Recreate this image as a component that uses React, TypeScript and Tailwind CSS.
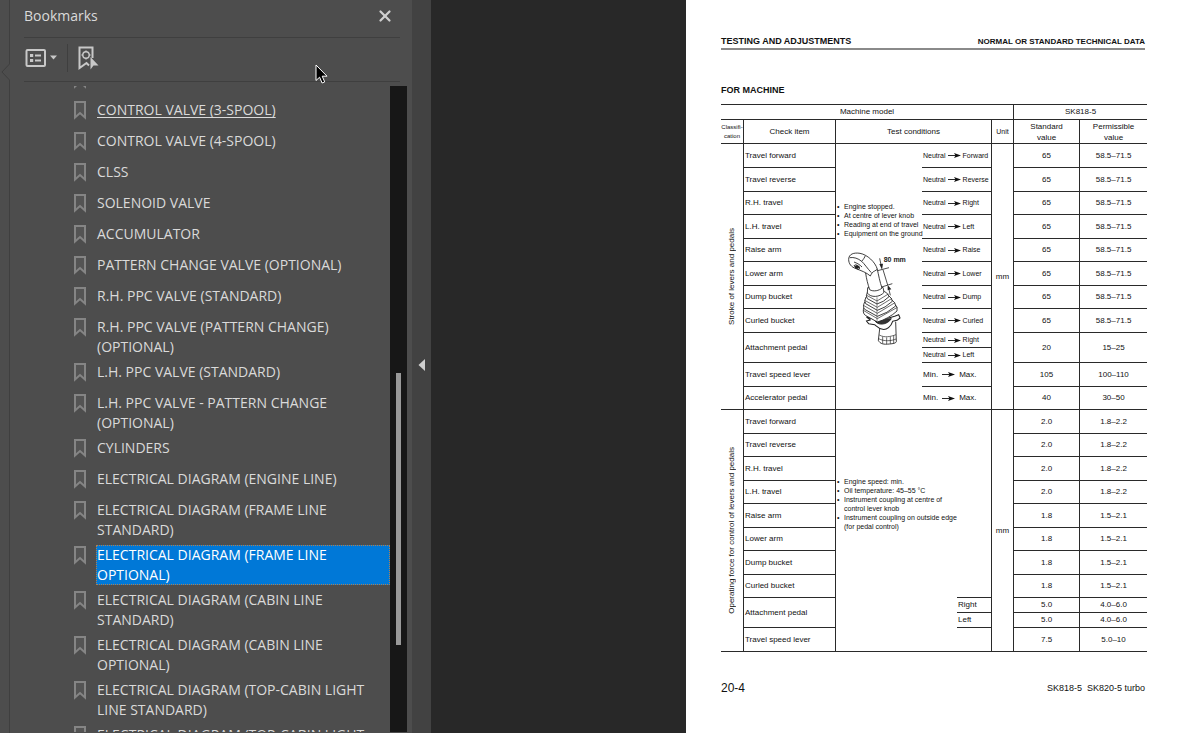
import { Fragment } from "react";
import clsx from "clsx";
import { X } from "lucide-react";

const bookmarks = [
  { label: "CONTROL VALVE (3-SPOOL)", current: true },
  { label: "CONTROL VALVE (4-SPOOL)" },
  { label: "CLSS" },
  { label: "SOLENOID VALVE" },
  { label: "ACCUMULATOR" },
  { label: "PATTERN CHANGE VALVE (OPTIONAL)" },
  { label: "R.H. PPC VALVE (STANDARD)" },
  { label: "R.H. PPC VALVE (PATTERN CHANGE) (OPTIONAL)" },
  { label: "L.H. PPC VALVE (STANDARD)" },
  { label: "L.H. PPC VALVE - PATTERN CHANGE (OPTIONAL)" },
  { label: "CYLINDERS" },
  { label: "ELECTRICAL DIAGRAM (ENGINE LINE)" },
  { label: "ELECTRICAL DIAGRAM (FRAME LINE STANDARD)" },
  { label: "ELECTRICAL DIAGRAM (FRAME LINE OPTIONAL)", selected: true },
  { label: "ELECTRICAL DIAGRAM (CABIN LINE STANDARD)" },
  { label: "ELECTRICAL DIAGRAM (CABIN LINE OPTIONAL)" },
  { label: "ELECTRICAL DIAGRAM (TOP-CABIN LIGHT LINE STANDARD)" },
  { label: "ELECTRICAL DIAGRAM (TOP-CABIN LIGHT" },
];

const strokeRows = [
  { item: "Travel forward", to: "Forward" },
  { item: "Travel reverse", to: "Reverse" },
  { item: "R.H. travel", to: "Right" },
  { item: "L.H. travel", to: "Left" },
  { item: "Raise arm", to: "Raise" },
  { item: "Lower arm", to: "Lower" },
  { item: "Dump bucket", to: "Dump" },
  { item: "Curled bucket", to: "Curled" },
];

const speedRows = [
  { item: "Travel speed lever", standard: "105", permissible: "100–110" },
  { item: "Accelerator pedal", standard: "40", permissible: "30–50" },
];

const forceRows = [
  { item: "Travel forward", standard: "2.0", permissible: "1.8–2.2" },
  { item: "Travel reverse", standard: "2.0", permissible: "1.8–2.2" },
  { item: "R.H. travel", standard: "2.0", permissible: "1.8–2.2" },
  { item: "L.H. travel", standard: "2.0", permissible: "1.8–2.2" },
  { item: "Raise arm", standard: "1.8", permissible: "1.5–2.1" },
  { item: "Lower arm", standard: "1.8", permissible: "1.5–2.1" },
  { item: "Dump bucket", standard: "1.8", permissible: "1.5–2.1" },
  { item: "Curled bucket", standard: "1.8", permissible: "1.5–2.1" },
];

const line = "border-[#2a2a2a]";

function BookmarkIcon() {
  return (
    <svg width="14" height="20" viewBox="0 0 14 20" className="shrink-0" aria-hidden="true">
      <path d="M2 2H12V17.500L7 13L2 17.500Z" fill="#545454" stroke="#858585" strokeWidth="2" />
    </svg>
  );
}

function PanelEdge() {
  return (
    <div className="flex w-[10px] shrink-0 flex-col items-end">
      <div className="h-16 w-px bg-[#3f3f3f]" />
      <svg width="10" height="16" viewBox="0 0 10 16" aria-hidden="true">
        <path d="M9.5 0L2 8L9.5 16" fill="none" stroke="#3f3f3f" />
      </svg>
      <div className="w-px flex-1 bg-[#3f3f3f]" />
    </div>
  );
}

function Toolbar() {
  return (
    <div className="flex h-11 items-center border-b border-[#3f3f3f] pb-1">
      <button type="button" aria-label="Options" className="flex items-center gap-1 pl-px">
        <svg width="21" height="18" viewBox="0 0 21 18">
          <rect x="1.500" y="1" width="18.500" height="16" rx="1" fill="none" stroke="#c8c8c8" strokeWidth="2" />
          <path d="M5 6.500H8.200M5 11.500H8.200" stroke="#c8c8c8" strokeWidth="3.200" />
          <path d="M10 6.500H16M10 11.500H16" stroke="#c8c8c8" strokeWidth="1.800" />
        </svg>
        <svg width="7" height="5" viewBox="0 0 7 5">
          <path d="M0 0.5H7L3.5 4.5Z" fill="#c8c8c8" />
        </svg>
      </button>
      <div className="ml-2.5 h-7 w-px bg-[#3f3f3f]" />
      <button type="button" aria-label="Find current bookmark" className="ml-2.5">
        <svg width="21" height="24" viewBox="0 0 21 24">
          <path d="M11 19.5L8.500 17L1.500 22V1.500H14.500V12" fill="none" stroke="#c8c8c8" strokeWidth="2" />
          <circle cx="8" cy="9" r="3.200" fill="none" stroke="#c8c8c8" strokeWidth="1.400" />
          <path d="M8 4.500V6M8 12V13.500M3.500 9H5M11 9H12.500" stroke="#c8c8c8" strokeWidth="1.400" />
          <path d="M12.500 11V23.500L15.500 19.500H20.500Z" fill="#c8c8c8" />
        </svg>
      </button>
    </div>
  );
}

function BookmarksPanel() {
  return (
    <aside className="flex h-full w-[431px] shrink-0 bg-[#4d4d4d] font-['Open_Sans','Noto_Sans',sans-serif] text-[14px] text-[#dadada]">
      <PanelEdge />
      <div className="flex min-w-0 flex-1 flex-col pb-px">
        <div className="ml-3.5 mr-3">
          <div className="flex h-[38px] items-center justify-between border-b border-[#3f3f3f] pb-1.5">
            <h2>Bookmarks</h2>
            <button type="button" aria-label="Close" className="mr-1.5">
              <X size={18} strokeWidth={3} color="#cfcfcf" />
            </button>
          </div>
          <Toolbar />
        </div>
        <div className="mt-1 flex min-h-0 flex-1 pr-[5px]">
          <ul className="min-w-0 flex-1 overflow-hidden pl-[63px]">
            <li className="flex h-3.5 flex-col justify-end overflow-hidden pb-[11px]" aria-hidden="true">
              <BookmarkIcon />
            </li>
            {bookmarks.map(({ label, current, selected }) => (
              <li key={label} className="flex min-h-[31px] items-start gap-[9px] pb-[5px]">
                <BookmarkIcon />
                <a
                  href="#"
                  className={clsx(
                    "flex-1 pl-px leading-5",
                    current && "underline underline-offset-2",
                    selected && "bg-[#0078d7] text-white outline-1 -outline-offset-1 outline-dotted outline-[#b08050]"
                  )}
                >
                  {label}
                </a>
              </li>
            ))}
          </ul>
          <div className="w-[17px] bg-[#171717] pl-1.5">
            <div style={{ height: "44.5%" }} />
            <div className="w-[5px] bg-[#999999]" style={{ height: "42%" }} />
          </div>
        </div>
      </div>
      <button
        type="button"
        aria-label="Collapse panel"
        className="flex w-[19px] items-center justify-center bg-[#424242] pb-1"
      >
        <svg width="7" height="12" viewBox="0 0 7 12">
          <path d="M7 0V12L0.500 6Z" fill="#cfcfcf" />
        </svg>
      </button>
    </aside>
  );
}

function Arrow() {
  return (
    <svg width="13" height="7" viewBox="0 0 13 7" className="shrink-0" aria-hidden="true">
      <path d="M0 3.500H8" stroke="#111" strokeWidth="0.900" />
      <path d="M6 1L13 3.500L6 6L7.500 3.500Z" fill="#111" />
    </svg>
  );
}

function Lever() {
  return (
    <svg width="65" height="97" viewBox="435 180 195 291" fill="none" stroke="#222" strokeWidth="2.600" strokeLinejoin="round">
      {/* connector */}
      <path d="M540 408L535 451C540 462 552 464 568 462C580 461 587 460 589 455L587 395" fill="#fff" />
      <path d="M538 435C553 444 572 440 588 434M536 446C552 455 575 453 588 447M548 440V461M560 442V462M571 440V461M581 437V459" strokeWidth="2" />
      {/* mounting plate */}
      <path
        d="M500 381L523 388L566 384L584 379L596 374L600 384L591 391L578 394C573 410 560 420 548 418C537 416 530 409 524 404L506 401L499 393L511 390Z"
        fill="#fff"
        strokeWidth="3.200"
      />
      <path d="M524 390C530 408 562 406 574 386Z" fill="#333" />
      {/* boot, lowest fold first */}
      <g fill="#fff">
        <path d="M492 352Q486 368 496 376L532 396Q566 386 591 363Q594 352 586 344Z" />
        <path d="M490 361L532 386L592 352" fill="none" strokeWidth="2" />
        <path d="M494 336Q487 350 494 358L532 379Q562 370 587 348Q587 338 576 330Z" />
        <path d="M490 346L532 370L585 338" fill="none" strokeWidth="2" />
        <path d="M498 321Q491 334 497 341L532 361Q556 354 577 334Q577 325 566 317Z" />
        <path d="M494 331L532 352L576 325" fill="none" strokeWidth="2" />
        <path d="M502 307Q496 319 502 326L531 342Q552 336 567 320Q566 311 553 304Z" />
        <path d="M500 316L531 333L565 312" fill="none" strokeWidth="2" />
        <path d="M531 322V396" fill="none" strokeWidth="1.500" />
        <path d="M503 293L502 309C512 324 540 322 552 307L549 292Z" />
      </g>
      {/* grip */}
      <path d="M497 249C499 266 504 284 509 299C520 306 538 302 546 294C540 278 535 252 532 238L515 235Z" fill="#fff" />
      <path d="M446 208C446 192 462 187 480 190C502 194 526 216 532 238L524 243C517 246 515 250 511 258C500 248 484 242 468 236C454 231 446 222 446 208Z" fill="#fff" />
      <path d="M449 203C462 201 474 205 485 214C492 220 502 235 514 248M485 214C491 207 494 202 496 197M462 216C470 219 480 224 486 231" />
      <path d="M462 227L468 224L480 234L474 239ZM466 232L478 229" />
      <ellipse cx="471" cy="231" rx="6" ry="4" fill="#222" />
      {/* dimension */}
      <path d="M533 242L567 233M545 291L577 281M539 205L543 224M549 239L563 285M567 299L571 316" strokeWidth="2.400" />
      <path d="M538 222L549 221L546 239ZM563 285L574 298L563 301Z" fill="#222" stroke="none" />
      <text x="551" y="217" fill="#222" stroke="none" fontSize="21" fontWeight="700">
        80 mm
      </text>
    </svg>
  );
}

function ItemCell({ children, rowSpan }: { children: string; rowSpan?: number }) {
  return (
    <td rowSpan={rowSpan} className={clsx("border-r border-b pl-px", line)}>
      {children}
    </td>
  );
}

function ValueCells({ standard, permissible, rowSpan }: { standard: string; permissible: string; rowSpan?: number }) {
  return (
    <>
      <td rowSpan={rowSpan} className={clsx("border-r border-b text-center", line)}>{standard}</td>
      <td rowSpan={rowSpan} className={clsx("border-b text-center", line)}>{permissible}</td>
    </>
  );
}

function MoveCell({ from = "Neutral", to }: { from?: string; to: string }) {
  return (
    <td colSpan={2} className={clsx("border-r border-b pl-px", line)}>
      <div className={clsx("flex items-center", from === "Neutral" ? "gap-0.5 text-[7px]" : "gap-1")}>
        <span>{from}</span>
        <Arrow />
        <span>{to}</span>
      </div>
    </td>
  );
}

function GroupCell({ children, rowSpan }: { children: string; rowSpan: number }) {
  return (
    <th rowSpan={rowSpan} scope="rowgroup" className={clsx("border-r border-b font-normal", line)}>
      <span className="inline-block rotate-180 whitespace-nowrap align-middle [writing-mode:vertical-rl]">
        {children}
      </span>
    </th>
  );
}

function Notes({ notes }: { notes: string[] }) {
  return (
    <ul className="whitespace-nowrap text-[7px] leading-[9px]">
      {notes.map((note) => (
        <li key={note} className="flex">
          <span className="w-[7px] shrink-0">•</span>
          <span className="whitespace-pre">{note}</span>
        </li>
      ))}
    </ul>
  );
}

function DataTable() {
  return (
    <table className="mt-2 w-full table-fixed border-separate border-spacing-0 text-[8px] leading-[10px]">
      <colgroup>
        <col className="w-[23px]" />
        <col className="w-[92px]" />
        <col className="w-[86px]" />
        <col className="w-[35px]" />
        <col className="w-[35px]" />
        <col className="w-[22px]" />
        <col className="w-[66px]" />
        <col className="w-[67px]" />
      </colgroup>
      <thead>
        <tr className="h-4">
          <th colSpan={6} className={clsx("border-t border-r border-b font-normal", line)}>Machine model</th>
          <th colSpan={2} className={clsx("border-t border-b font-normal", line)}>SK818-5</th>
        </tr>
        <tr className="h-6">
          <th className={clsx("border-r border-b text-[6px] leading-[9px] font-normal", line)}>
            Classifi-
            <br />
            cation
          </th>
          <th className={clsx("border-r border-b font-normal", line)}>Check item</th>
          <th colSpan={3} className={clsx("border-r border-b font-normal", line)}>Test conditions</th>
          <th className={clsx("border-r border-b text-[7px] font-normal", line)}>Unit</th>
          <th className={clsx("border-r border-b leading-[11px] font-normal", line)}>
            Standard
            <br />
            value
          </th>
          <th className={clsx("border-b leading-[11px] font-normal", line)}>
            Permissible
            <br />
            value
          </th>
        </tr>
      </thead>
      <tbody>
        {strokeRows.map(({ item, to }, i) => (
          <tr key={item} className={i > 0 && i % 2 === 0 ? "h-[23px]" : "h-6"}>
            {i === 0 && <GroupCell rowSpan={12}>Stroke of levers and pedals</GroupCell>}
            <ItemCell>{item}</ItemCell>
            {i === 0 && (
              <td rowSpan={12} className={clsx("border-b pt-[58px] pl-px align-top", line)}>
                <Notes
                  notes={["Engine stopped.", "At centre of lever knob", "Reading at end of travel", "Equipment on the ground"]}
                />
                <div className="mt-3 pl-2">
                  <Lever />
                </div>
              </td>
            )}
            <MoveCell to={to} />
            {i === 0 && <td rowSpan={12} className={clsx("border-r border-b text-center", line)}>mm</td>}
            <ValueCells standard="65" permissible="58.5–71.5" />
          </tr>
        ))}
        <tr className="h-[15px]">
          <ItemCell rowSpan={2}>Attachment pedal</ItemCell>
          <MoveCell to="Right" />
          <ValueCells rowSpan={2} standard="20" permissible="15–25" />
        </tr>
        <tr className="h-[15px]">
          <MoveCell to="Left" />
        </tr>
        {speedRows.map(({ item, standard, permissible }, i) => (
          <tr key={item} className={i === 1 ? "h-[23px]" : "h-6"}>
            <ItemCell>{item}</ItemCell>
            <MoveCell from="Min." to="Max." />
            <ValueCells standard={standard} permissible={permissible} />
          </tr>
        ))}
      </tbody>
      <tbody>
        {forceRows.map(({ item, standard, permissible }, i) => (
          <tr key={item} className={i % 2 === 1 ? "h-[23px]" : "h-6"}>
            {i === 0 && <GroupCell rowSpan={11}>Operating force for control of levers and pedals</GroupCell>}
            <ItemCell>{item}</ItemCell>
            {i === 0 && (
              <Fragment>
                <td rowSpan={11} colSpan={2} className={clsx("border-b pt-[67px] pl-px align-top", line)}>
                  <Notes
                    notes={[
                      "Engine speed: min.",
                      "Oil temperature: 45–55 °C",
                      "Instrument coupling at centre of\ncontrol lever knob",
                      "Instrument coupling on outside edge\n(for pedal control)",
                    ]}
                  />
                </td>
                <td rowSpan={8} className={clsx("border-r border-b", line)} />
                <td rowSpan={11} className={clsx("border-r border-b text-center", line)}>mm</td>
              </Fragment>
            )}
            <ValueCells standard={standard} permissible={permissible} />
          </tr>
        ))}
        <tr className="h-[15px]">
          <ItemCell rowSpan={2}>Attachment pedal</ItemCell>
          <ItemCell>Right</ItemCell>
          <ValueCells standard="5.0" permissible="4.0–6.0" />
        </tr>
        <tr className="h-[15px]">
          <ItemCell>Left</ItemCell>
          <ValueCells standard="5.0" permissible="4.0–6.0" />
        </tr>
        <tr className="h-6">
          <ItemCell>Travel speed lever</ItemCell>
          <td className={clsx("border-r border-b", line)} />
          <ValueCells standard="7.5" permissible="5.0–10" />
        </tr>
      </tbody>
    </table>
  );
}

function ManualPage() {
  return (
    <article className="min-h-full flex-1 bg-white pt-[35px] pr-[53px] pl-[35px] font-['Liberation_Sans',Arial,sans-serif] text-[#111]">
      <header className="mr-0.5 flex items-center justify-between border-b-2 border-[#8a8a8a] font-bold leading-[13px]">
        <h1 className="text-[9px]">TESTING AND ADJUSTMENTS</h1>
        <p className="text-[8px]">NORMAL OR STANDARD TECHNICAL DATA</p>
      </header>
      <h2 className="mt-[34px] text-[9px] leading-3 font-bold">FOR MACHINE</h2>
      <DataTable />
      <footer className="mt-7 mr-0.5 flex items-center justify-between leading-4">
        <span className="text-[12px]">20-4</span>
        <span className="text-[9px] whitespace-pre">SK818-5  SK820-5 turbo</span>
      </footer>
    </article>
  );
}

function Cursor() {
  return (
    <svg width="13" height="21" viewBox="0 0 13 21" className="absolute top-16 left-[315px]" aria-hidden="true">
      <path
        d="M1 1V16.500L4.600 13.200L7.100 19L9.700 17.900L7.200 12.200H12Z"
        fill="#000"
        stroke="#fff"
      />
    </svg>
  );
}

export default function App() {
  return (
    <div className="relative flex h-screen overflow-hidden bg-[#282828]">
      <BookmarksPanel />
      <main className="flex min-w-0 flex-1 pl-[255px]">
        <ManualPage />
      </main>
      <Cursor />
    </div>
  );
}
